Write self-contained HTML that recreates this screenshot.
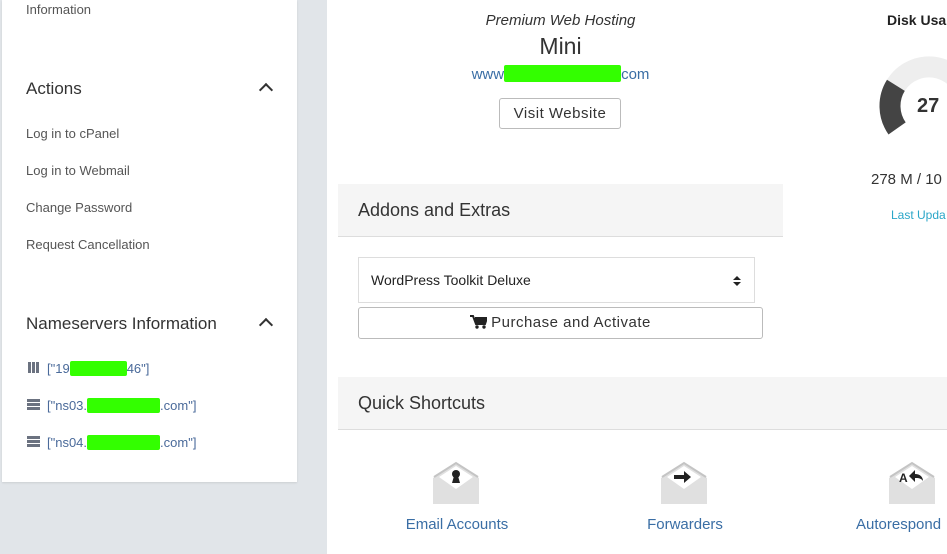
<!DOCTYPE html><html><head><style>
body{margin:0;width:947px;height:554px;overflow:hidden;background:#e1e5e9;font-family:"Liberation Sans",sans-serif;position:relative}
.a{position:absolute}
.side{left:2px;top:0;width:295px;height:482px;background:#fff;box-shadow:0 1px 2px rgba(0,0,0,.1)}
.h{font-size:17px;color:#333;}
.l{font-size:13px;color:#555;left:26px}
.ns{font-size:13px;color:#4a6a9a;left:47px}
.g{background:#33ff00;display:inline-block;height:15px;vertical-align:-3px;border-radius:2px}
.main{left:327px;top:0;width:620px;height:554px;background:#fff}
.chev{width:8px;height:8px;border-left:2px solid #333;border-top:2px solid #333;transform:rotate(45deg)}
.ph{background:#f5f5f5;border-bottom:1px solid #ddd;font-size:18px;color:#333}
.lbl{font-size:15px;color:#3a6ea5;text-align:center;width:160px}
</style></head><body>
<div class="a side"></div>
<div class="a l" style="top:2px;left:26px">Information</div>
<div class="a h" style="left:26px;top:79px">Actions</div>
<div class="a chev" style="left:261px;top:85px"></div>
<div class="a l" style="top:126px">Log in to cPanel</div>
<div class="a l" style="top:163px">Log in to Webmail</div>
<div class="a l" style="top:200px">Change Password</div>
<div class="a l" style="top:237px">Request Cancellation</div>
<div class="a h" style="left:26px;top:314px">Nameservers Information</div>
<div class="a chev" style="left:261px;top:320px"></div>
<div class="a" style="left:28px;top:362px;width:11px;height:11px;background:repeating-linear-gradient(90deg,#6b7280 0 3px,#fff 3px 4px)"></div>
<div class="a ns" style="top:361px">["19<span class="g" style="width:57px"></span>46"]</div>
<div class="a" style="left:27px;top:399px;width:13px;height:12px;background:repeating-linear-gradient(180deg,#6b7280 0 3px,#fff 3px 4px)"></div>
<div class="a ns" style="top:398px">["ns03.<span class="g" style="width:73px"></span>.com"]</div>
<div class="a" style="left:27px;top:436px;width:13px;height:12px;background:repeating-linear-gradient(180deg,#6b7280 0 3px,#fff 3px 4px)"></div>
<div class="a ns" style="top:435px">["ns04.<span class="g" style="width:73px"></span>.com"]</div>

<div class="a main"></div>
<div class="a" style="left:338px;top:12px;width:445px;text-align:center;font-style:italic;font-size:15px;color:#333">Premium Web Hosting</div>
<div class="a" style="left:338px;top:33px;width:445px;text-align:center;font-size:23px;color:#333">Mini</div>
<div class="a" style="left:338px;top:65px;width:445px;text-align:center;font-size:15px;color:#3a6ea5">www<span class="g" style="width:117px;height:17px"></span>com</div>
<div class="a" style="left:499px;top:98px;width:122px;height:31px;border:1px solid #bbb;border-radius:3px;box-sizing:border-box;text-align:center;line-height:29px;font-size:15px;color:#333;letter-spacing:.5px">Visit Website</div>

<div class="a" style="left:887px;top:12px;font-size:14px;font-weight:bold;color:#222">Disk Usa</div>
<svg class="a" style="left:870px;top:47px" width="118" height="120"><path d="M25.9 38.3 A39 39 0 0 1 98 59" fill="none" stroke="#eee" stroke-width="21"/><path d="M25.9 38.3 A39 39 0 0 0 27.1 81.4" fill="none" stroke="#444" stroke-width="21"/></svg>
<div class="a" style="left:917px;top:95px;font-size:20px;font-weight:bold;color:#333">27</div>
<div class="a" style="left:871px;top:171px;font-size:15px;color:#333">278 M / 10</div>
<div class="a" style="left:891px;top:208px;font-size:12px;color:#2aa6c8">Last Upda</div>

<div class="a ph" style="left:338px;top:184px;width:445px;height:53px;line-height:52px;padding-left:20px;box-sizing:border-box">Addons and Extras</div>
<div class="a" style="left:358px;top:257px;width:397px;height:46px;border:1px solid #ddd;box-sizing:border-box;font-size:14px;color:#222;line-height:44px;padding-left:12px">WordPress Toolkit Deluxe</div>
<svg class="a" style="left:733px;top:275px" width="8" height="12"><path d="M0 5 L4 1 L8 5Z M0 7 L4 11 L8 7Z" fill="#222"/></svg>
<div class="a" style="left:358px;top:307px;width:405px;height:32px;border:1px solid #bbb;border-radius:3px;box-sizing:border-box;text-align:center;line-height:30px;font-size:15px;color:#333;letter-spacing:.5px"><svg width="17" height="14" style="vertical-align:-2px;margin-right:4px"><path d="M0 1h3l3 8h9l2-6H5" fill="none" stroke="#222" stroke-width="2"/><path d="M4 3h13l-2 6H6z" fill="#222"/><circle cx="7" cy="12" r="1.7" fill="#222"/><circle cx="14" cy="12" r="1.7" fill="#222"/></svg>Purchase and Activate</div>

<div class="a ph" style="left:338px;top:377px;width:609px;height:53px;line-height:52px;padding-left:20px;box-sizing:border-box">Quick Shortcuts</div>

<svg class="a" style="left:432px;top:461px" width="50" height="45"><path d="M1 17 L24 1 L47 17 L47 43 L1 43Z" fill="#e0e0e0"/><path d="M2 16 L24 2 L46 16" fill="none" stroke="#c4c4c4" stroke-width="2"/><path d="M7 16 L24 5 L41 16 L24 28Z" fill="#fff"/><circle cx="24" cy="13" r="4" fill="#222"/><path d="M22 15h4l2 7h-8z" fill="#222"/></svg>
<svg class="a" style="left:660px;top:461px" width="50" height="45"><path d="M1 17 L24 1 L47 17 L47 43 L1 43Z" fill="#e0e0e0"/><path d="M2 16 L24 2 L46 16" fill="none" stroke="#c4c4c4" stroke-width="2"/><path d="M7 16 L24 5 L41 16 L24 28Z" fill="#fff"/><path d="M14 14h10v-4l7 6-7 6v-4h-10z" fill="#222"/></svg>
<svg class="a" style="left:888px;top:461px" width="50" height="45"><path d="M1 17 L24 1 L47 17 L47 43 L1 43Z" fill="#e0e0e0"/><path d="M2 16 L24 2 L46 16" fill="none" stroke="#c4c4c4" stroke-width="2"/><path d="M7 16 L24 5 L41 16 L24 28Z" fill="#fff"/><text x="11" y="21" font-size="12" font-weight="bold" fill="#222">A</text><path d="M21 15l6-6v4c5 0 8 3 8 7-2-3-5-3-8-3v4z" fill="#222"/></svg>
<div class="a lbl" style="left:377px;top:516px">Email Accounts</div>
<div class="a lbl" style="left:605px;top:516px">Forwarders</div>
<div class="a lbl" style="left:856px;top:516px;text-align:left">Autorespond</div>
</body></html>
